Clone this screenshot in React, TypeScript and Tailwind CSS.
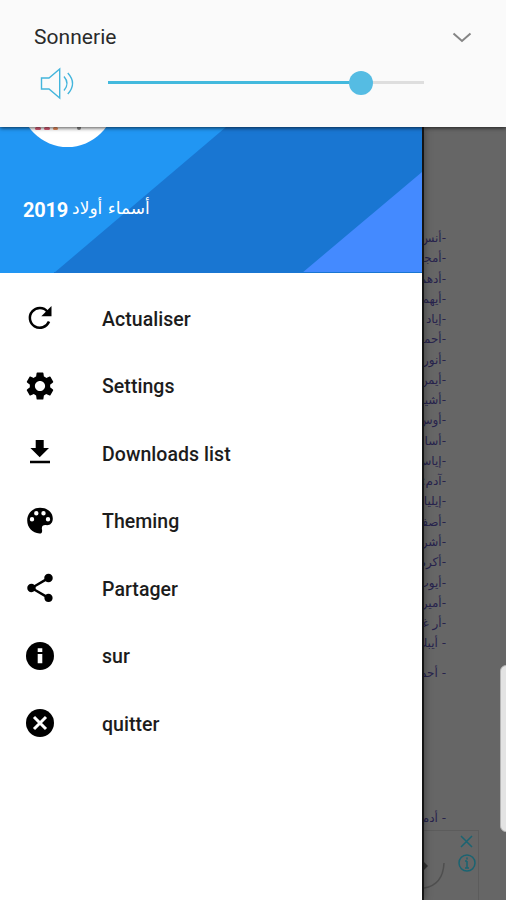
import React from "react";
import { MdShare, MdSettings } from "react-icons/md";

type IconProps = { className?: string };

function RefreshIcon({ className }: IconProps) {
  return (
    <svg viewBox="0 0 34 34" fill="none" className={className}>
      <path d="M26 20.500A9.900 9.900 0 1 1 24.500 10.700" stroke="currentColor" strokeWidth="2.500" />
      <path d="M28.500 5v10.300H18.300z" fill="currentColor" />
    </svg>
  );
}

function DownloadIcon({ className }: IconProps) {
  return (
    <svg viewBox="0 0 34 34" fill="currentColor" className={className}>
      <path d="M12.700 4h8v8h5.300l-9.300 9.300L7.400 12h5.300zM7 24.700h20v2.600H7z" />
    </svg>
  );
}

function PaletteIcon({ className }: IconProps) {
  return (
    <svg viewBox="0 0 34 34" fill="currentColor" className={className}>
      <path
        fillRule="evenodd"
        d="M17 3.700C24.500 3.700 29.800 8.500 29.800 14.500C29.800 18.500 27.500 21.200 24 21.200C20.500 20.300 18.200 22 19 25.500C19.500 28 18.800 29.500 16.500 29.500C9.500 29 4.200 23.500 4.200 16.500C4.200 9.500 9.500 3.700 17 3.700zM9 13a2.200 2.200 0 1 0 0 4.400a2.200 2.200 0 0 0 0-4.400zM13.300 7a2.200 2.200 0 1 0 0 4.400a2.200 2.200 0 0 0 0-4.400zM20.500 7a2.200 2.200 0 1 0 0 4.400a2.200 2.200 0 0 0 0-4.400zM25 13a2.200 2.200 0 1 0 0 4.400a2.200 2.200 0 0 0 0-4.400z"
      />
    </svg>
  );
}

function InfoIcon({ className }: IconProps) {
  return (
    <svg viewBox="0 0 34 34" className={className}>
      <circle cx="17" cy="17" r="14" fill="currentColor" />
      <path d="M14.700 9.300h4.600v3.800h-4.600zM14.700 15h4.600v9.300h-4.600z" fill="#fff" />
    </svg>
  );
}

function CloseIcon({ className }: IconProps) {
  return (
    <svg viewBox="0 0 34 34" className={className}>
      <circle cx="17" cy="17" r="14" fill="currentColor" />
      <path d="m11 11 12 12M23 11 11 23" stroke="#fff" strokeWidth="3" />
    </svg>
  );
}

const items = [
  { label: "Actualiser", Icon: RefreshIcon },
  { label: "Settings", Icon: MdSettings },
  { label: "Downloads list", Icon: DownloadIcon },
  { label: "Theming", Icon: PaletteIcon },
  { label: "Partager", Icon: MdShare },
  { label: "sur", Icon: InfoIcon },
  { label: "quitter", Icon: CloseIcon },
];

const names = [
  "-أنس", "-أمجد", "-أدهم", "-أيهم", "-إياد", "-أحمد", "-أنور", "-أيمن", "-أشيب", "-أوس", "-أسامة",
  "-إياس", "-آدم:", "-إيليا", "-أصف", "-أشرف", "-أكرم", "-أيوب", "-أمير", "-أر غد", "- أيبك",
];

function VolumePanel() {
  return (
    <section className="relative z-10 h-[127px] bg-[#fafafa] pl-[34px] pr-[34px] pt-[24px] shadow-[0_1px_4px_rgba(0,0,0,0.7)]">
      <div className="flex h-7 items-center justify-between">
        <span className="text-[21px] tracking-[0.050px] text-[#2a2a2a]">Sonnerie</span>
        <svg viewBox="0 0 20 12" className="h-3 w-5" fill="none" stroke="#858585" strokeWidth="2">
          <path d="M1.500 1.500 10 9l8.500-7.500" />
        </svg>
      </div>
      <div className="mt-[12px] flex h-[37px] items-center">
        <svg viewBox="0 0 36 36" className="h-9 w-9 shrink-0 overflow-visible" fill="none" stroke="#43b5dc" strokeWidth="1.400">
          <path d="M7.500 13h7.500L25.700 4v29L15 24H7.500zM30 11.500q6 7 0 14M33.800 8q9.500 10.500 0 21" />
        </svg>
        <div className="ml-[38px] flex w-[316px] items-center">
          <div className="h-[3px] w-[241px] bg-[#43b9dd]" />
          <div className="size-6 shrink-0 rounded-full bg-[#55bce3]" />
          <div className="h-[3px] flex-1 bg-[#dedede]" />
        </div>
      </div>
    </section>
  );
}

function Drawer() {
  return (
    <aside className="relative z-[1] w-[422px] shrink-0 bg-white shadow-[2px_0_8px_rgba(0,0,0,0.4)]">
      <header className="relative h-[146px] overflow-hidden bg-[#2196f3]">
        <svg viewBox="0 0 422 146" className="absolute inset-0 h-full w-full">
          <path fill="#1976d2" d="M226 0 54 146h368V0z" />
          <path fill="#448aff" d="M422 45 302 146h120z" />
          <path fill="#1976d2" d="M54 145h368v1H54z" />
        </svg>
        <div className="relative -mt-[75px] ml-[20px] flex h-[95px] w-[95px] items-end justify-center overflow-hidden rounded-full bg-white">
          <div className="mb-[17px] flex h-[4px] w-[66px] items-end gap-[3px]">
            <i className="h-[3px] w-[6px] rounded-full bg-[#e0607a]" />
            <i className="h-[3px] w-[6px] rounded-full bg-[#e0607a]" />
            <i className="h-[3px] w-[5px] rounded-full bg-[#ef9060]" />
            <i className="ml-[16px] h-[4px] w-[4px] rounded-full bg-[#888]" />
          </div>
        </div>
        <div className="relative ml-[23px] mt-[51px] flex h-6 items-center gap-[4px] text-white">
          <b className="text-[20px] font-bold tracking-[-0.200px]">2019</b>
          <span dir="rtl" className="-mt-[3px] whitespace-nowrap font-['DejaVu_Sans'] text-[17px]">أسماء أولاد</span>
        </div>
      </header>
      <nav className="pt-[12px]">
        {items.map(({ label, Icon }) => (
          <div key={label} className="flex h-[67.500px] items-center pl-[23px]">
            <Icon className="-mt-[1px] size-[34px] shrink-0 text-black" />
            <span className="ml-[45px] mt-[1px] whitespace-nowrap text-[19.500px] font-medium tracking-[0.050px] text-[#1c1c1c]">{label}</span>
          </div>
        ))}
      </nav>
    </aside>
  );
}

function Ad() {
  return (
    <div className="mt-[2px] flex h-[70px] w-[55px] justify-between overflow-hidden border-r border-t border-[#5c5c5c]">
      <svg viewBox="0 0 30 70" className="h-[70px] w-[30px]" fill="none" stroke="#4f4f4f" strokeWidth="1.500">
        <path d="M20 32Q19 54 0 57" />
        <path d="m0 31 4 4-4 4z" fill="#333" stroke="none" />
      </svg>
      <svg viewBox="0 0 20 50" className="mr-[1px] mt-[1px] h-[50px] w-5" fill="none" stroke="#1a6472" strokeWidth="1.500">
        <path d="m4 4 11 11M15 4 4 15" />
        <circle cx="10" cy="31" r="8" />
        <path d="M10 29v7M10 25.500v2M8 29h2M8 36h4" />
      </svg>
    </div>
  );
}

export default function App() {
  return (
    <main className="relative h-[900px] w-[506px] overflow-hidden bg-[#666] font-['Roboto',sans-serif]">
      <VolumePanel />
      <div className="flex h-[773px]">
        <Drawer />
        <section className="flex-1 overflow-hidden border-l-2 border-[#1c1c1c] pt-[101px]">
          <ul dir="rtl" className="w-[22px] whitespace-nowrap font-['DejaVu_Sans'] text-[12px] text-[#27234d]">
            {names.map((n) => (
              <li key={n} className="h-[20.270px] leading-[20px]">{n}</li>
            ))}
            <li className="mt-[9px] h-5 leading-5">- أحمد</li>
            <li className="mt-[125px] h-5 leading-5">- أدم</li>
          </ul>
          <Ad />
        </section>
      </div>
      <div className="absolute -right-2 top-[665px] z-20 h-[167px] w-[14px] rounded-[6px] border border-[#b5b5b5] bg-[#e3e3e3]" />
    </main>
  );
}
